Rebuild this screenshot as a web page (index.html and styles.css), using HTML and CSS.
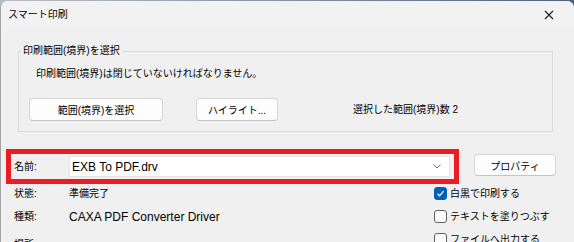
FILE: index.html
```html
<!doctype html>
<html lang="ja">
  <head>
    <meta charset="UTF-8" />
    <title>スマート印刷</title>
    <link rel="stylesheet" href="styles.css">
  </head>

  <body>
    <div class="window">
      <div class="titlebar">
        <span class="title">スマート印刷</span>
        <svg class="close" width="10" height="10" viewBox="0 0 10 10">
          <path d="M1 1L9 9M9 1L1 9" stroke="#1f1f1f" stroke-width="1.1" fill="none" />
        </svg>
      </div>

      <div class="main">
        <fieldset class="group">
          <legend>印刷範囲(境界)を選択</legend>
          <div class="group-body">
            <p class="note">印刷範囲(境界)は閉じていないければなりません。</p>
            <div class="btn-row">
              <button class="btn btn-range">範囲(境界)を選択</button>
              <button class="btn btn-highlight">ハイライト...</button>
              <span class="count">選択した範囲(境界)数 2</span>
            </div>
          </div>
        </fieldset>

        <div class="name-row">
          <div class="name-box">
            <span class="label">名前:</span>
            <div class="combo">
              <span class="latin">EXB To PDF.drv</span>
              <svg class="chevron" width="8" height="5" viewBox="0 0 8 5">
                <path d="M0.5 0.5L4 4L7.5 0.5" stroke="#6b6b6b" stroke-width="1" fill="none" />
              </svg>
            </div>
          </div>
          <button class="btn btn-props">プロパティ</button>
        </div>

        <div class="details">
          <div class="info">
            <div class="row"><span class="label">状態:</span><span>準備完了</span></div>
            <div class="row"><span class="label">種類:</span><span class="latin">CAXA PDF Converter Driver</span></div>
            <div class="row row-last"><span class="label">場所:</span></div>
          </div>
          <div class="options">
            <label class="check">
              <span class="box checked">
                <svg width="9" height="9" viewBox="0 0 9 9">
                  <path d="M1.5 4.8L3.6 6.8L7.6 2.2" stroke="#ffffff" stroke-width="1.2" fill="none" />
                </svg>
              </span>
              白黒で印刷する
            </label>
            <label class="check"><span class="box"></span>テキストを塗りつぶす</label>
            <label class="check"><span class="box"></span>ファイルへ出力する</label>
          </div>
        </div>
      </div>
    </div>
  </body>
</html>
```

FILE: styles.css
```css
* {
  margin: 0;
  padding: 0;
  box-sizing: border-box;
}

body {
  width: 574px;
  height: 242px;
  overflow: hidden;
  background: linear-gradient(to right, #b9bcc4 0%, #8d96a8 45%, #4f5f80 100%);
  font-family: 'Liberation Sans', 'Noto Sans CJK JP', sans-serif;
  font-size: 10px;
  line-height: 14px;
  color: #000000;
}

.window {
  height: 241px;
  margin-top: 1px;
  background-color: #f0f0f0;
  border-left: 1px solid #a3a3a3;
  border-radius: 7px 7px 0 0;
  overflow: hidden;
}

.titlebar {
  height: 28px;
  display: flex;
  align-items: center;
  justify-content: space-between;
  padding: 0 20px 0 7px;
  background-color: #f2f2f2;
}

.main {
  padding-left: 5px;
}

.group {
  width: 535px;
  margin: 15px 0 0 12px;
  border: 1px solid #dcdcdc;
  min-width: 0;
}

.group legend {
  margin-left: 2px;
  padding: 0 2px;
  line-height: 14px;
}

.group-body {
  padding: 9px 0 10px 10px;
}

.note {
  margin: 0 0 17px 7px;
}

.btn-row {
  display: flex;
  align-items: center;
}

.btn {
  height: 23px;
  font-family: inherit;
  font-size: 10px;
  color: #000000;
  background-color: #fdfdfd;
  border: 1px solid #d6d6d6;
  border-bottom-color: #c4c4c4;
  border-radius: 4px;
}

.btn-range {
  width: 134px;
}

.btn-highlight {
  width: 82px;
  margin-left: 33px;
}

.count {
  margin-left: 75px;
}

.name-row {
  display: flex;
  align-items: flex-start;
  margin-top: 17px;
}

.name-box {
  width: 453px;
  height: 35px;
  display: flex;
  align-items: center;
  padding-left: 3px;
  border: 5px solid #ec1c24;
}

.label {
  width: 55px;
  flex: none;
}

.combo {
  width: 381px;
  height: 21px;
  display: flex;
  align-items: center;
  padding-left: 2px;
  background-color: #ffffff;
  border: 1px solid #e3e3e3;
}

.chevron {
  margin-left: auto;
  margin-right: 8px;
}

.latin {
  font-size: 12px;
}

.btn-props {
  width: 82px;
  height: 22px;
  margin: 5px 0 0 15px;
}

.details {
  display: flex;
  margin-top: -2px;
}

.info {
  flex: 0 0 428px;
  padding-left: 8px;
}

.row {
  height: 23px;
  display: flex;
  align-items: center;
}

.row-last {
  margin-top: 5px;
}

.options {
  display: flex;
  flex-direction: column;
}

.check {
  height: 23px;
  display: flex;
  align-items: center;
  gap: 3px;
}

.box {
  width: 13px;
  height: 13px;
  display: flex;
  align-items: center;
  justify-content: center;
  background-color: #fbfbfb;
  border: 1px solid #606060;
  border-radius: 3px;
}

.box.checked {
  background-color: #005fb8;
  border-color: #005fb8;
}
```
